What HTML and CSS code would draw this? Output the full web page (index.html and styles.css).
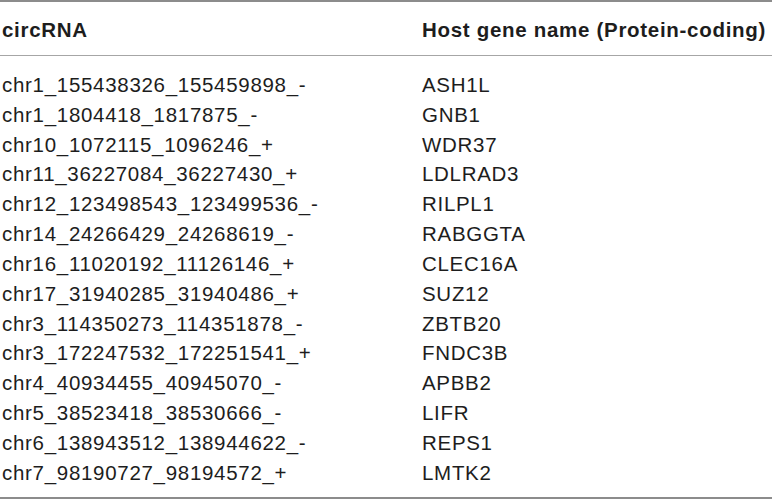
FILE: index.html
```html
<!DOCTYPE html>
<html>
<head>
<meta charset="utf-8">
<link rel="stylesheet" href="styles.css">
</head>
<body>
<table class="tbl">
  <colgroup><col class="c1"><col class="c2"></colgroup>
  <thead>
    <tr><th>circRNA</th><th>Host gene name (Protein-coding)</th></tr>
  </thead>
  <tbody>
    <tr><td>chr1_155438326_155459898_-</td><td>ASH1L</td></tr>
    <tr><td>chr1_1804418_1817875_-</td><td>GNB1</td></tr>
    <tr><td>chr10_1072115_1096246_+</td><td>WDR37</td></tr>
    <tr><td>chr11_36227084_36227430_+</td><td>LDLRAD3</td></tr>
    <tr><td>chr12_123498543_123499536_-</td><td>RILPL1</td></tr>
    <tr><td>chr14_24266429_24268619_-</td><td>RABGGTA</td></tr>
    <tr><td>chr16_11020192_11126146_+</td><td>CLEC16A</td></tr>
    <tr><td>chr17_31940285_31940486_+</td><td>SUZ12</td></tr>
    <tr><td>chr3_114350273_114351878_-</td><td>ZBTB20</td></tr>
    <tr><td>chr3_172247532_172251541_+</td><td>FNDC3B</td></tr>
    <tr><td>chr4_40934455_40945070_-</td><td>APBB2</td></tr>
    <tr><td>chr5_38523418_38530666_-</td><td>LIFR</td></tr>
    <tr><td>chr6_138943512_138944622_-</td><td>REPS1</td></tr>
    <tr><td>chr7_98190727_98194572_+</td><td>LMTK2</td></tr>
  </tbody>
</table>
</body>
</html>
```
FILE: styles.css
```css
html, body {
  margin: 0;
  padding: 0;
  background: #ffffff;
}
.tbl {
  width: 772px;
  border-collapse: collapse;
  table-layout: fixed;
  font-family: "Liberation Sans", Arial, sans-serif;
  font-size: 20.5px;
  letter-spacing: 0.7px;
  line-height: 29.85px;
  color: #1d1d1d;
  border-top: 2px solid #8c8c8c;
  border-bottom: 2px solid #8c8c8c;
}
.c1 { width: 422px; }
.c2 { width: 350px; }
.tbl th {
  text-align: left;
  font-weight: bold;
  white-space: nowrap;
  padding: 13px 0 10px 0;
  border-bottom: 1px solid #a6a6a6;
}
.tbl td {
  padding: 0;
  white-space: nowrap;
}
.tbl th:first-child, .tbl td:first-child {
  padding-left: 2px;
}
.tbl tbody tr:first-child td { padding-top: 14px; }
.tbl tbody tr:last-child td { padding-bottom: 9px; }
```
